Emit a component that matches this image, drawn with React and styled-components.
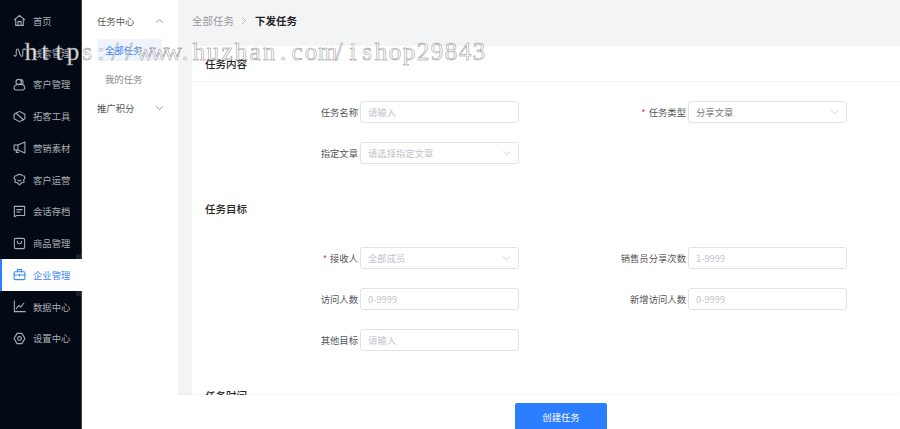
import React from "react";
import styled, { createGlobalStyle } from "styled-components";

const FONT = `"Noto Sans CJK SC", "Noto Sans", "Liberation Sans", sans-serif`;
const MARK = "https://www.huzhan.com/ishop29843";

const GlobalStyle = createGlobalStyle`
  html, body { margin: 0; padding: 0; height: 100%; background: #f3f4f6; }
  * { box-sizing: border-box; }
  body { font-family: ${FONT}; overflow: hidden; }
`;

const icons = {
  home: (
    <>
      <path d="M2.500 11 12 2.500l9.500 8.500" />
      <path d="M5 9v12h14V9" />
      <path d="M9 21v-7h6v7" />
    </>
  ),
  wave: (
    <path d="M2 17c2 3 4 2 4-2V9c0-4 4-5 5 0l2 7c1 4 5 4 5 0V9c0-4 3-5 5-2" />
  ),
  users: (
    <>
      <circle cx="10.500" cy="7.500" r="5" />
      <path d="M15 3c4 1 5 6 2 9" />
      <path d="M2 18c0-7 15-9 19-3 2 4 0 7-3 7H6c-3 0-4-2-4-4z" />
    </>
  ),
  tool: (
    <>
      <path d="M12 2.500l10 5.500v8l-10 5.500L2 16V8z" />
      <path d="M5.500 5.500l14 13" />
    </>
  ),
  megaphone: (
    <>
      <path d="M22 2v20L9 16.500H2v-9h7z" />
      <path d="M9 7.500v9" />
      <path d="M6 16.500V21h4" />
    </>
  ),
  shield: (
    <>
      <path d="M6.500 5c3.500-3 7.500-3 11 0l3.500.5 1 4.500-2.500 2.500 1 4.500-4.500 1L12 22l-4-4-4.500-1 1-4.500L2 10l1-4.500z" />
      <path d="M9 13c2 2 4 2 6 0" />
    </>
  ),
  message: (
    <>
      <path d="M2.500 2.500h19v17H7l-4.500 2z" />
      <path d="M7 8.500h10M7 13h6" />
    </>
  ),
  bag: (
    <>
      <rect x="2.500" y="2.500" width="19" height="19" rx="3" />
      <path d="M8 8c0 6 8 6 8 0" />
    </>
  ),
  case: (
    <>
      <rect x="2" y="7" width="20" height="14.500" rx="2" />
      <path d="M8 7V3h8v4" />
      <path d="M2 13h20M12 11.500v3" />
    </>
  ),
  chart: (
    <>
      <path d="M2.500 1.500v20h20" />
      <path d="M6 16l5-6 3 3 6-7" />
    </>
  ),
  gear: (
    <>
      <path d="M7.500 2.500h9L22 12l-5.500 9.500h-9L2 12z" />
      <circle cx="12" cy="12" r="3.500" />
    </>
  ),
};

const navItems = [
  { key: "home", label: "首页" },
  { key: "wave", label: "线索管理" },
  { key: "users", label: "客户管理" },
  { key: "tool", label: "拓客工具" },
  { key: "megaphone", label: "营销素材" },
  { key: "shield", label: "客户运营" },
  { key: "message", label: "会话存档" },
  { key: "bag", label: "商品管理" },
  { key: "case", label: "企业管理", active: true },
  { key: "chart", label: "数据中心" },
  { key: "gear", label: "设置中心" },
];

function NavIcon({ name }) {
  return (
    <IconSvg viewBox="0 0 24 24" fill="none" stroke="currentColor" strokeWidth="2" strokeLinejoin="round" strokeLinecap="round">
      {icons[name]}
    </IconSvg>
  );
}

function Chevron({ up, color }) {
  return (
    <ChevronSvg viewBox="0 0 12 8" fill="none" stroke={color} strokeWidth="1">
      <path d={up ? "M1.500 6 6 2l4.500 4" : "M1.500 2 6 6l4.500-4"} />
    </ChevronSvg>
  );
}

function Field({ label, required, placeholder, select, value }) {
  return (
    <Row>
      <Label>
        {required && <Star>*</Star>}
        {label}
      </Label>
      <InputBox>
        <InputText $value={value}>{value || placeholder}</InputText>
        {select && <Chevron color="#c0c4cc" />}
      </InputBox>
    </Row>
  );
}

export default function App() {
  return (
    <Page>
      <GlobalStyle />
      <Sidebar>
        {navItems.map((item) => (
          <NavItem key={item.label} $active={item.active}>
            <NavIcon name={item.key} />
            <span>{item.label}</span>
          </NavItem>
        ))}
      </Sidebar>
      <SubMenu>
        <SubTitle>
          任务中心
          <Chevron up color="#777" />
        </SubTitle>
        <SubItem $active>全部任务</SubItem>
        <SubItem>我的任务</SubItem>
        <SubTitle>
          推广积分
          <Chevron color="#777" />
        </SubTitle>
      </SubMenu>
      <Main>
        <Crumbs>
          <CrumbLink>全部任务</CrumbLink>
          <CrumbArrow viewBox="0 0 8 12" fill="none" stroke="#aaa" strokeWidth="1">
            <path d="M1.500 1.500 6 6l-4.500 4.500" />
          </CrumbArrow>
          <CrumbNow>下发任务</CrumbNow>
        </Crumbs>
        <Panel>
          <FirstHead>任务内容</FirstHead>
          <Form $top={19}>
            <Field label="任务名称" placeholder="请输入" />
            <Field label="任务类型" required select value="分享文章" />
            <Field label="指定文章" placeholder="请选择指定文章" select />
          </Form>
          <SectionHead>任务目标</SectionHead>
          <Form $top={31}>
            <Field label="接收人" required placeholder="全部成员" select />
            <Field label="销售员分享次数" placeholder="1-9999" />
            <Field label="访问人数" placeholder="0-9999" />
            <Field label="新增访问人数" placeholder="0-9999" />
            <Field label="其他目标" placeholder="请输入" />
          </Form>
          <SectionHead>任务时间</SectionHead>
        </Panel>
        <Footer>
          <CreateButton>创建任务</CreateButton>
        </Footer>
      </Main>
      <Watermark>
        {MARK.split("").map((ch, i) => (
          <MarkChar key={i}>{ch}</MarkChar>
        ))}
      </Watermark>
    </Page>
  );
}

const Page = styled.div`
  display: flex;
  position: relative;
  width: 100%;
  height: 100vh;
  overflow: hidden;
`;

const Sidebar = styled.nav`
  width: 82px;
  flex: none;
  padding-top: 5px;
  background: #030a16;
  border-right: 1px solid #3c4148;
`;

const NavItem = styled.div`
  position: relative;
  display: flex;
  align-items: center;
  height: 31.75px;
  margin-right: ${(p) => (p.$active ? "-1px" : "0")};
  padding-left: ${(p) => (p.$active ? "11px" : "13px")};
  gap: 7px;
  font-size: 9.33px;
  color: ${(p) => (p.$active ? "#3c87f5" : "#a9adb3")};
  background: ${(p) => (p.$active ? "#fff" : "transparent")};
  border-left: ${(p) => (p.$active ? "2px solid #2b7eff" : "none")};

  ${(p) =>
    p.$active &&
    `
    &::before, &::after {
      content: "";
      position: absolute;
      right: 1px;
      width: 5px;
      height: 5px;
      background: #1b2028;
    }
    &::before { top: -5px; }
    &::after { bottom: -5px; }
  `}
`;

const IconSvg = styled.svg`
  width: 13px;
  height: 13px;
  flex: none;
`;

const ChevronSvg = styled.svg`
  width: 9px;
  height: 6px;
  flex: none;
`;

const SubMenu = styled.aside`
  width: 96px;
  flex: none;
  padding: 10px 14px 0 15px;
  background: #fff;
`;

const SubTitle = styled.div`
  display: flex;
  align-items: center;
  justify-content: space-between;
  height: 22px;
  margin-bottom: 7px;
  font-size: 9.33px;
  color: #555;
`;

const SubItem = styled.div`
  display: flex;
  align-items: center;
  width: 65px;
  height: 22px;
  margin-bottom: 7px;
  padding-left: 8px;
  border-radius: 2px;
  font-size: 9.33px;
  color: ${(p) => (p.$active ? "#2b7eff" : "#8a8a8a")};
  background: ${(p) => (p.$active ? "#eef3fd" : "transparent")};
`;

const Main = styled.main`
  flex: 1;
  min-width: 0;
  display: flex;
  flex-direction: column;
  background: #f3f4f6;
`;

const Crumbs = styled.div`
  display: flex;
  align-items: center;
  height: 46px;
  flex: none;
  padding: 0 0 6px 14px;
`;

const CrumbLink = styled.span`
  font-size: 10.5px;
  color: #999;
`;

const CrumbArrow = styled.svg`
  width: 6px;
  height: 9px;
  margin: 0 8px 0 7px;
`;

const CrumbNow = styled.span`
  font-size: 10.5px;
  font-weight: 700;
  color: #222;
`;

const Panel = styled.section`
  flex: 1;
  min-height: 0;
  margin-left: 14px;
  overflow: hidden;
  background: #fff;
`;

const SectionHead = styled.h3`
  display: flex;
  align-items: center;
  height: 16px;
  margin: 0;
  padding-left: 13px;
  font-size: 10.5px;
  font-weight: 500;
  color: #222;
`;

const FirstHead = styled(SectionHead)`
  height: 36px;
  border-bottom: 1px solid #f0f0f0;
`;

const Form = styled.div`
  display: grid;
  grid-template-columns: repeat(2, 328px);
  row-gap: 19px;
  padding-top: ${(p) => p.$top}px;
  padding-bottom: 36px;
`;

const Row = styled.div`
  display: flex;
  align-items: center;
  height: 22px;
  gap: 2px;
`;

const Label = styled.label`
  width: 166px;
  flex: none;
  text-align: right;
  font-size: 9.33px;
  color: #555;
`;

const Star = styled.span`
  margin-right: 3px;
  color: #e5484d;
`;

const InputBox = styled.div`
  display: flex;
  align-items: center;
  justify-content: space-between;
  width: 159px;
  height: 22px;
  padding: 0 7px;
  border: 1px solid #e1e3e8;
  border-radius: 3px;
  background: #fff;
`;

const InputText = styled.span`
  font-size: 9.33px;
  color: ${(p) => (p.$value ? "#777" : "#c0c4cc")};
`;

const Footer = styled.footer`
  position: relative;
  display: flex;
  justify-content: center;
  height: 34px;
  flex: none;
  padding: 8px 0 0 44px;
  overflow: hidden;
  background: #fff;
  box-shadow: 0 -1px 2px rgba(0, 0, 0, 0.04);
`;

const CreateButton = styled.button`
  width: 92px;
  height: 28px;
  flex: none;
  border: 0;
  border-radius: 2px;
  font-family: ${FONT};
  font-size: 9.33px;
  color: #fff;
  background: #2b7eff;
`;

const Watermark = styled.div`
  position: absolute;
  top: 36px;
  left: 24px;
  display: flex;
  font-family: "Liberation Serif", serif;
  font-size: 25px;
  line-height: 32px;
  white-space: nowrap;
  color: rgba(255, 255, 255, 0.9);
  -webkit-text-stroke: 0.5px #8d8d8d;
  pointer-events: none;
`;

const MarkChar = styled.span`
  width: 14px;
  flex: none;
  text-align: center;
`;
